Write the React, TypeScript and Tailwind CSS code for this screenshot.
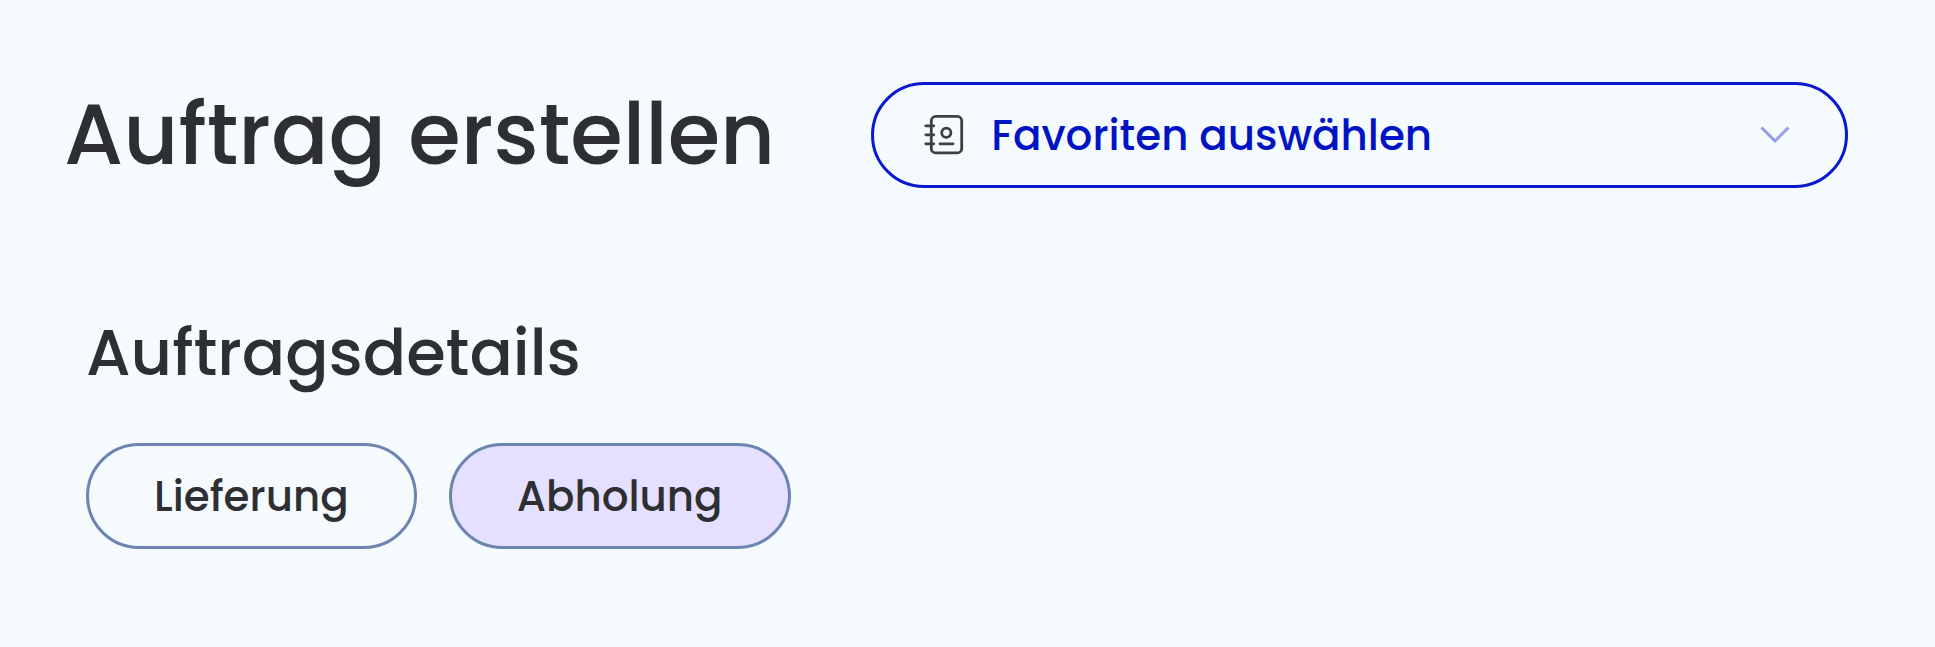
import { useState } from "react";

const modes = ["Lieferung", "Abholung"];

function ContactBookIcon({ className }: { className?: string }) {
  return (
    <svg className={className} viewBox="0 0 42 42" fill="none" stroke="currentColor" strokeWidth="2.8" strokeLinecap="round" aria-hidden="true">
      <rect x="8.3" y="2.3" width="30.4" height="36.6" rx="4.5" />
      <path d="M2.800 11.800h8M2.800 20.800h8M2.800 29.800h8" />
      <circle cx="23.3" cy="18.8" r="4.6" />
      <path d="M17 29.800h13" />
    </svg>
  );
}

function ChevronIcon({ className }: { className?: string }) {
  return (
    <svg className={className} viewBox="0 0 30 18" fill="none" stroke="currentColor" strokeWidth="3" aria-hidden="true">
      <path d="M1.500 1.500 15 15 28.500 1.500" />
    </svg>
  );
}

export default function App() {
  const [mode, setMode] = useState("Abholung");

  return (
    <main className="min-h-screen bg-[#f5faff] pt-[82px] pb-24 pl-16 pr-[87px] font-[Poppins,Inter,sans-serif] font-medium text-[#2e2f33]">
      {/* Title and favourites */}
      <header className="flex items-center gap-24">
        <h1 className="whitespace-nowrap text-[85px] leading-[106px]">Auftrag erstellen</h1>
        <div className="relative flex-1">
          <select
            aria-label="Favoriten auswählen"
            defaultValue=""
            className="block h-[106px] w-full appearance-none rounded-full border-3 border-[#0a19cc] bg-transparent pl-[117px] pr-24 text-[42px] text-[#0014c4]"
          >
            <option value="">Favoriten auswählen</option>
          </select>
          <ContactBookIcon className="pointer-events-none absolute left-[52px] top-8 size-[42px] text-[#3e3f43]" />
          <ChevronIcon className="pointer-events-none absolute right-[58px] top-11 w-[30px] text-[#969eea]" />
        </div>
      </header>

      {/* Order details */}
      <section className="pl-[22px] pt-[125px]">
        <h2 className="text-[64px] leading-[80px]">Auftragsdetails</h2>
        <div className="mt-[50px] flex gap-8">
          {modes.map((m) => (
            <button
              key={m}
              type="button"
              aria-pressed={m === mode}
              onClick={() => setMode(m)}
              className={`h-[106px] rounded-full border-3 border-[#6c85b0] px-[65px] text-[42px] ${m === mode ? "bg-[#e5e0ff]" : ""}`}
            >
              {m}
            </button>
          ))}
        </div>
      </section>
    </main>
  );
}
